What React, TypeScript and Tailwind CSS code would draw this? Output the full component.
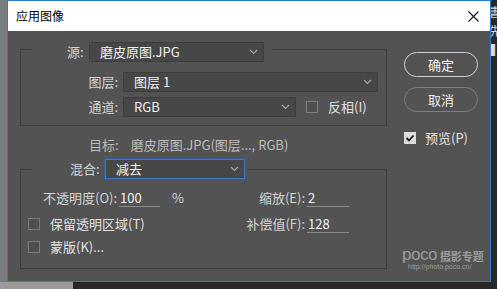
import React from "react";

const FONT = '"Noto Sans CJK SC", "Noto Sans", "Liberation Sans", sans-serif';

function Chevron() {
  return (
    <svg width="9" height="6" viewBox="0 0 9 6" className="shrink-0">
      <polyline points="1,1 4.5,4.5 8,1" fill="none" stroke="#a8a8a8" strokeWidth="1.1" />
    </svg>
  );
}

function Select({ w, text, focus }: { w: string; text: string; focus?: boolean }) {
  return (
    <div
      className={`${w} h-[20px] flex items-center justify-between pl-[10px] pr-[5px] bg-[#474747] border ${
        focus ? "border-[#3a78c9] shadow-[0_0_0_1px_#2c5f9e]" : "border-[#3e3e3e]"
      }`}
    >
      <span className="text-[13px] leading-[18px] text-[#f0f0f0]">{text}</span>
      <Chevron />
    </div>
  );
}

function Box({ checked }: { checked?: boolean }) {
  if (checked)
    return (
      <div className="w-[12px] h-[12px] bg-[#dcdcdc] flex items-center justify-center shrink-0">
        <svg width="10" height="10" viewBox="0 0 10 10">
          <polyline points="1.5,5 4,7.5 8.5,2.5" fill="none" stroke="#1a1a1a" strokeWidth="1.8" />
        </svg>
      </div>
    );
  return <div className="w-[12px] h-[12px] border border-[#7c7c7c] bg-[#4e4e4e] shrink-0" />;
}

function Num({ w, v }: { w: string; v: string }) {
  return (
    <div className={`${w} h-[18px] border-b border-[#8a8a8a] pl-[1px] text-[13px] leading-[17px] text-[#f2f2f2]`}>
      {v}
    </div>
  );
}

export default function App() {
  return (
    <div
      className="w-[497px] h-[289px] bg-[#272727] flex flex-col overflow-hidden"
      style={{ fontFamily: FONT }}
    >
      <div className="flex h-[282px]">
        <div className="w-[7px] bg-[#7b7b7b]" />
        <div className="w-[484px] border border-[#2b7bd1] flex flex-col">
          {/* title bar */}
          <div className="h-[30px] bg-white flex items-center justify-between pl-[8px] pr-[11px]">
            <span className="text-[12px] leading-[16px] text-black">应用图像</span>
            <svg width="11" height="11" viewBox="0 0 11 11">
              <line x1="0.5" y1="0.5" x2="10.5" y2="10.5" stroke="#111" strokeWidth="1.1" />
              <line x1="10.5" y1="0.5" x2="0.5" y2="10.5" stroke="#111" strokeWidth="1.1" />
            </svg>
          </div>
          {/* body */}
          <div className="flex-1 bg-[#535353] flex pl-[12px] pt-[5px] text-[#d4d4d4]">
            {/* left column */}
            <div className="w-[367px] flex flex-col">
              <fieldset className="border border-[#3d3d3d] pb-[8px]">
                <legend className="ml-[11px] pt-[6px]">
                  <div className="flex items-center pl-[35px] pr-[8px]">
                    <span className="text-[13px] leading-[18px] w-[22px]">源:</span>
                    <Select w="w-[175px]" text="磨皮原图.JPG" />
                  </div>
                </legend>
                <div className="flex items-center mt-[10px]">
                  <span className="w-[97px] text-right text-[13px] leading-[18px]">图层:</span>
                  <div className="ml-[5px]">
                    <Select w="w-[255px]" text="图层 1" />
                  </div>
                </div>
                <div className="flex items-center mt-[5px]">
                  <span className="w-[97px] text-right text-[13px] leading-[18px]">通道:</span>
                  <div className="ml-[5px]">
                    <Select w="w-[173px]" text="RGB" />
                  </div>
                  <div className="ml-[10px]">
                    <Box />
                  </div>
                  <span className="ml-[10px] text-[13px] leading-[18px] text-[#e2e2e2]">反相(I)</span>
                </div>
              </fieldset>

              <div className="flex items-center h-[18px] mt-[10px] pl-[69px] text-[13px] leading-[18px] text-[#bdbdbd]">
                <span>目标:</span>
                <span className="ml-[12px]">磨皮原图.JPG(图层..., RGB)</span>
              </div>

              <fieldset className="border border-[#3d3d3d] mt-[5px] pb-[12px]">
                <legend className="ml-[11px]">
                  <div className="flex items-center pl-[38px] pr-[2px]">
                    <span className="text-[13px] leading-[18px] w-[35px]">混合:</span>
                    <Select w="w-[140px]" text="减去" focus />
                  </div>
                </legend>
                <div className="flex items-center h-[18px] mt-[10px] pl-[22px] pr-[37px]">
                  <span className="text-[13px] leading-[18px]">不透明度(O):</span>
                  <div className="ml-[2px]">
                    <Num w="w-[41px]" v="100" />
                  </div>
                  <span className="ml-[12px] text-[13px] leading-[18px]">%</span>
                  <div className="ml-auto flex items-center">
                    <span className="text-[13px] leading-[18px]">缩放(E):</span>
                    <div className="ml-[2px]">
                      <Num w="w-[42px]" v="2" />
                    </div>
                  </div>
                </div>
                <div className="flex items-center h-[18px] mt-[8px] pl-[7px] pr-[37px]">
                  <Box />
                  <span className="ml-[10px] text-[13px] leading-[18px] text-[#e2e2e2]">保留透明区域(T)</span>
                  <div className="ml-auto flex items-center">
                    <span className="text-[13px] leading-[18px]">补偿值(F):</span>
                    <div className="ml-[2px]">
                      <Num w="w-[42px]" v="128" />
                    </div>
                  </div>
                </div>
                <div className="flex items-center h-[18px] mt-[5px] pl-[7px]">
                  <Box />
                  <span className="ml-[10px] text-[13px] leading-[18px] text-[#e2e2e2]">蒙版(K)...</span>
                </div>
              </fieldset>
            </div>

            {/* right column */}
            <div className="ml-[17px] flex flex-col pb-[10px]">
              <button className="mt-[16px] w-[74px] h-[25px] rounded-full border border-[#cfcfcf] text-[13px] leading-[18px] text-[#f2f2f2]">
                确定
              </button>
              <button className="mt-[10px] w-[74px] h-[25px] rounded-full border border-[#7e7e7e] text-[13px] leading-[18px] text-[#ececec]">
                取消
              </button>
              <div className="mt-[17px] flex items-center">
                <Box checked />
                <span className="ml-[9px] text-[13px] leading-[18px] text-[#e2e2e2]">预览(P)</span>
              </div>
              <div className="mt-auto -ml-[2px] flex flex-col text-[#9c9c9c]">
                <div className="flex items-end leading-none">
                  <span className="text-[17px] leading-[14px] font-light tracking-[-0.5px]" style={{ fontFamily: '"Liberation Sans", sans-serif' }}>
                    poco
                  </span>
                  <span className="ml-[3px] text-[11px] leading-[12px] font-bold">摄影专题</span>
                </div>
                <span className="text-[7px] leading-[8px] pl-[6px] mt-[1px]" style={{ fontFamily: '"Liberation Sans", sans-serif' }}>
                  http://photo.poco.cn/
                </span>
              </div>
            </div>
          </div>
        </div>
        <div className="w-[6px] bg-[#262a30] flex flex-col items-start pt-[2px] overflow-hidden text-[12px] leading-[19px] text-[#dcdcdc]">
          <span className="-ml-[2px]">書</span>
          <span className="-ml-[2px]">先</span>
          <span className="-ml-[2px]">▌</span>
        </div>
      </div>
      <div className="h-[7px] flex">
        <div className="w-[73px] bg-[#9a9a9a]" />
      </div>
    </div>
  );
}
